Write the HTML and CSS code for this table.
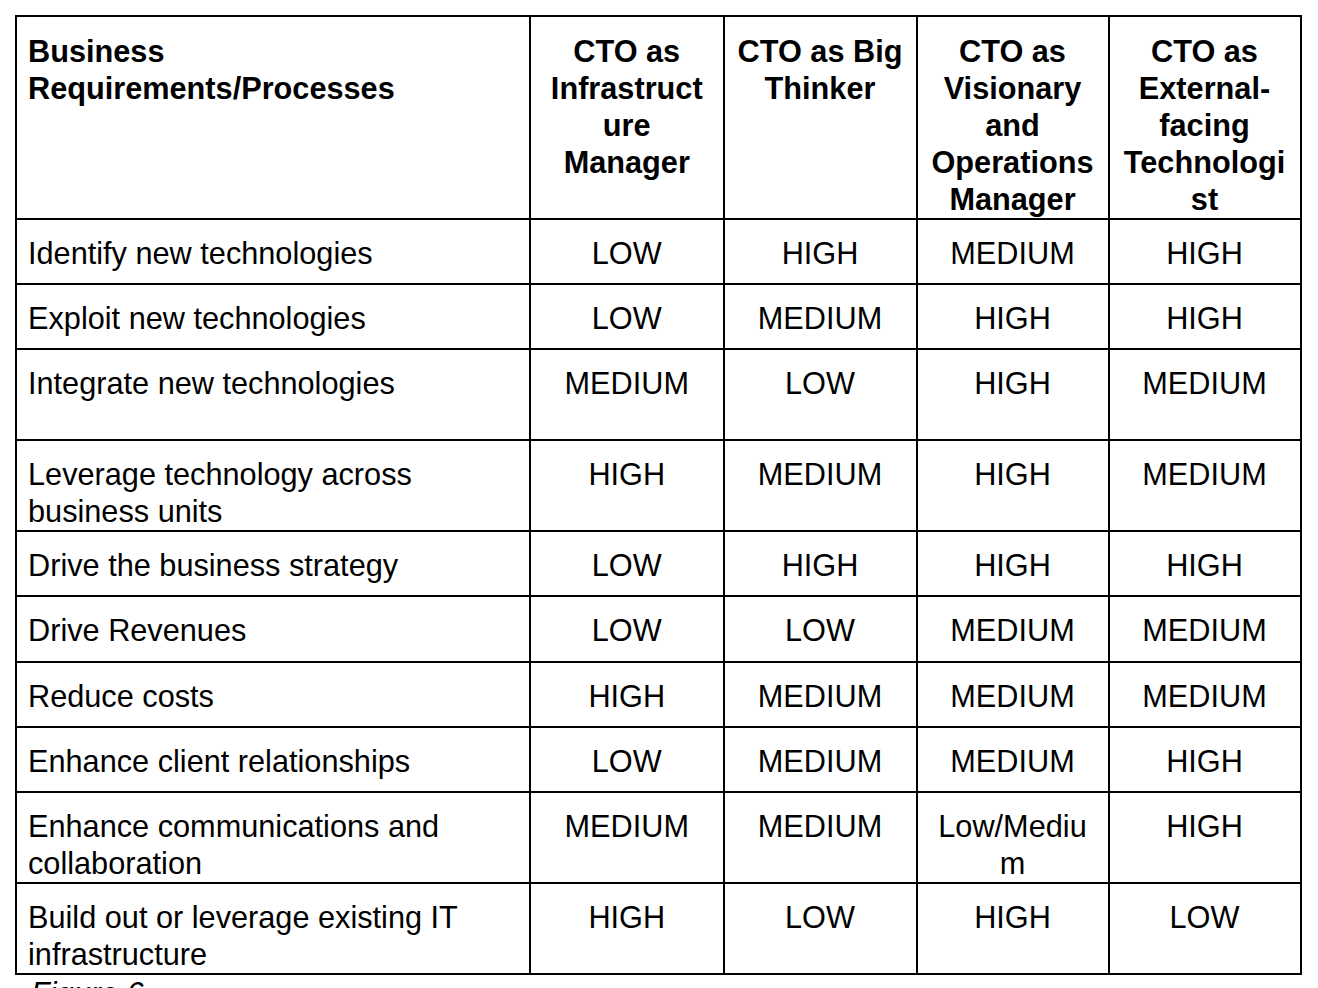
FILE: index.html
```html
<!DOCTYPE html>
<html lang="en">
<head>
<meta charset="utf-8">
<title>CTO roles vs business requirements</title>
<link rel="stylesheet" href="styles.css">
</head>
<body>
<div class="page">
  <table class="matrix">
    <colgroup>
      <col class="c-req">
      <col class="c-role c-r1">
      <col class="c-role c-r2">
      <col class="c-role c-r3">
      <col class="c-role c-r4">
    </colgroup>
    <thead>
      <tr class="head-row">
        <th class="req">Business Requirements/Processes</th>
        <th>CTO as Infrastructure Manager</th>
        <th>CTO as Big Thinker</th>
        <th>CTO as Visionary and Operations Manager</th>
        <th>CTO as External-facing Technologist</th>
      </tr>
    </thead>
    <tbody>
      <tr><td class="req">Identify new technologies</td><td>LOW</td><td>HIGH</td><td>MEDIUM</td><td>HIGH</td></tr>
      <tr><td class="req">Exploit new technologies</td><td>LOW</td><td>MEDIUM</td><td>HIGH</td><td>HIGH</td></tr>
      <tr class="tall"><td class="req">Integrate new technologies</td><td>MEDIUM</td><td>LOW</td><td>HIGH</td><td>MEDIUM</td></tr>
      <tr><td class="req">Leverage technology across business units</td><td>HIGH</td><td>MEDIUM</td><td>HIGH</td><td>MEDIUM</td></tr>
      <tr><td class="req">Drive the business strategy</td><td>LOW</td><td>HIGH</td><td>HIGH</td><td>HIGH</td></tr>
      <tr><td class="req">Drive Revenues</td><td>LOW</td><td>LOW</td><td>MEDIUM</td><td>MEDIUM</td></tr>
      <tr><td class="req">Reduce costs</td><td>HIGH</td><td>MEDIUM</td><td>MEDIUM</td><td>MEDIUM</td></tr>
      <tr><td class="req">Enhance client relationships</td><td>LOW</td><td>MEDIUM</td><td>MEDIUM</td><td>HIGH</td></tr>
      <tr><td class="req">Enhance communications and collaboration</td><td>MEDIUM</td><td>MEDIUM</td><td>Low/Medium</td><td>HIGH</td></tr>
      <tr><td class="req">Build out or leverage existing IT infrastructure</td><td>HIGH</td><td>LOW</td><td>HIGH</td><td>LOW</td></tr>
    </tbody>
  </table>
  <p class="caption">Figure 6</p>
</div>
</body>
</html>
```

FILE: styles.css
```css
html, body {
  margin: 0;
  padding: 0;
  background: #ffffff;
}

body {
  font-family: "Liberation Sans", Arial, sans-serif;
  font-size: 30.7px;
  line-height: 37px;
  color: #000000;
}

.page {
  padding: 15px 0 0 15px;
}

.matrix {
  table-layout: fixed;
  border-collapse: collapse;
  width: 1286px;
}

.c-req { width: 514px; }
.c-r1 { width: 193.5px; }
.c-r2 { width: 193px; }
.c-r3 { width: 192px; }
.c-r4 { width: 192px; }

.matrix th,
.matrix td {
  border: 2px solid #000000;
  padding: 15px 11px 0 11px;
  vertical-align: top;
  text-align: center;
  overflow-wrap: anywhere;
  word-break: normal;
}

.matrix th {
  font-weight: bold;
}

.matrix th {
  padding-top: 15.5px;
}

.matrix .req {
  text-align: left;
  overflow-wrap: normal;
}

.matrix tbody tr {
  height: 65.3px;
}

.matrix tbody tr.tall {
  height: 91px;
}

.caption {
  margin: 0;
  padding-left: 16px;
  font-style: italic;
}
```
